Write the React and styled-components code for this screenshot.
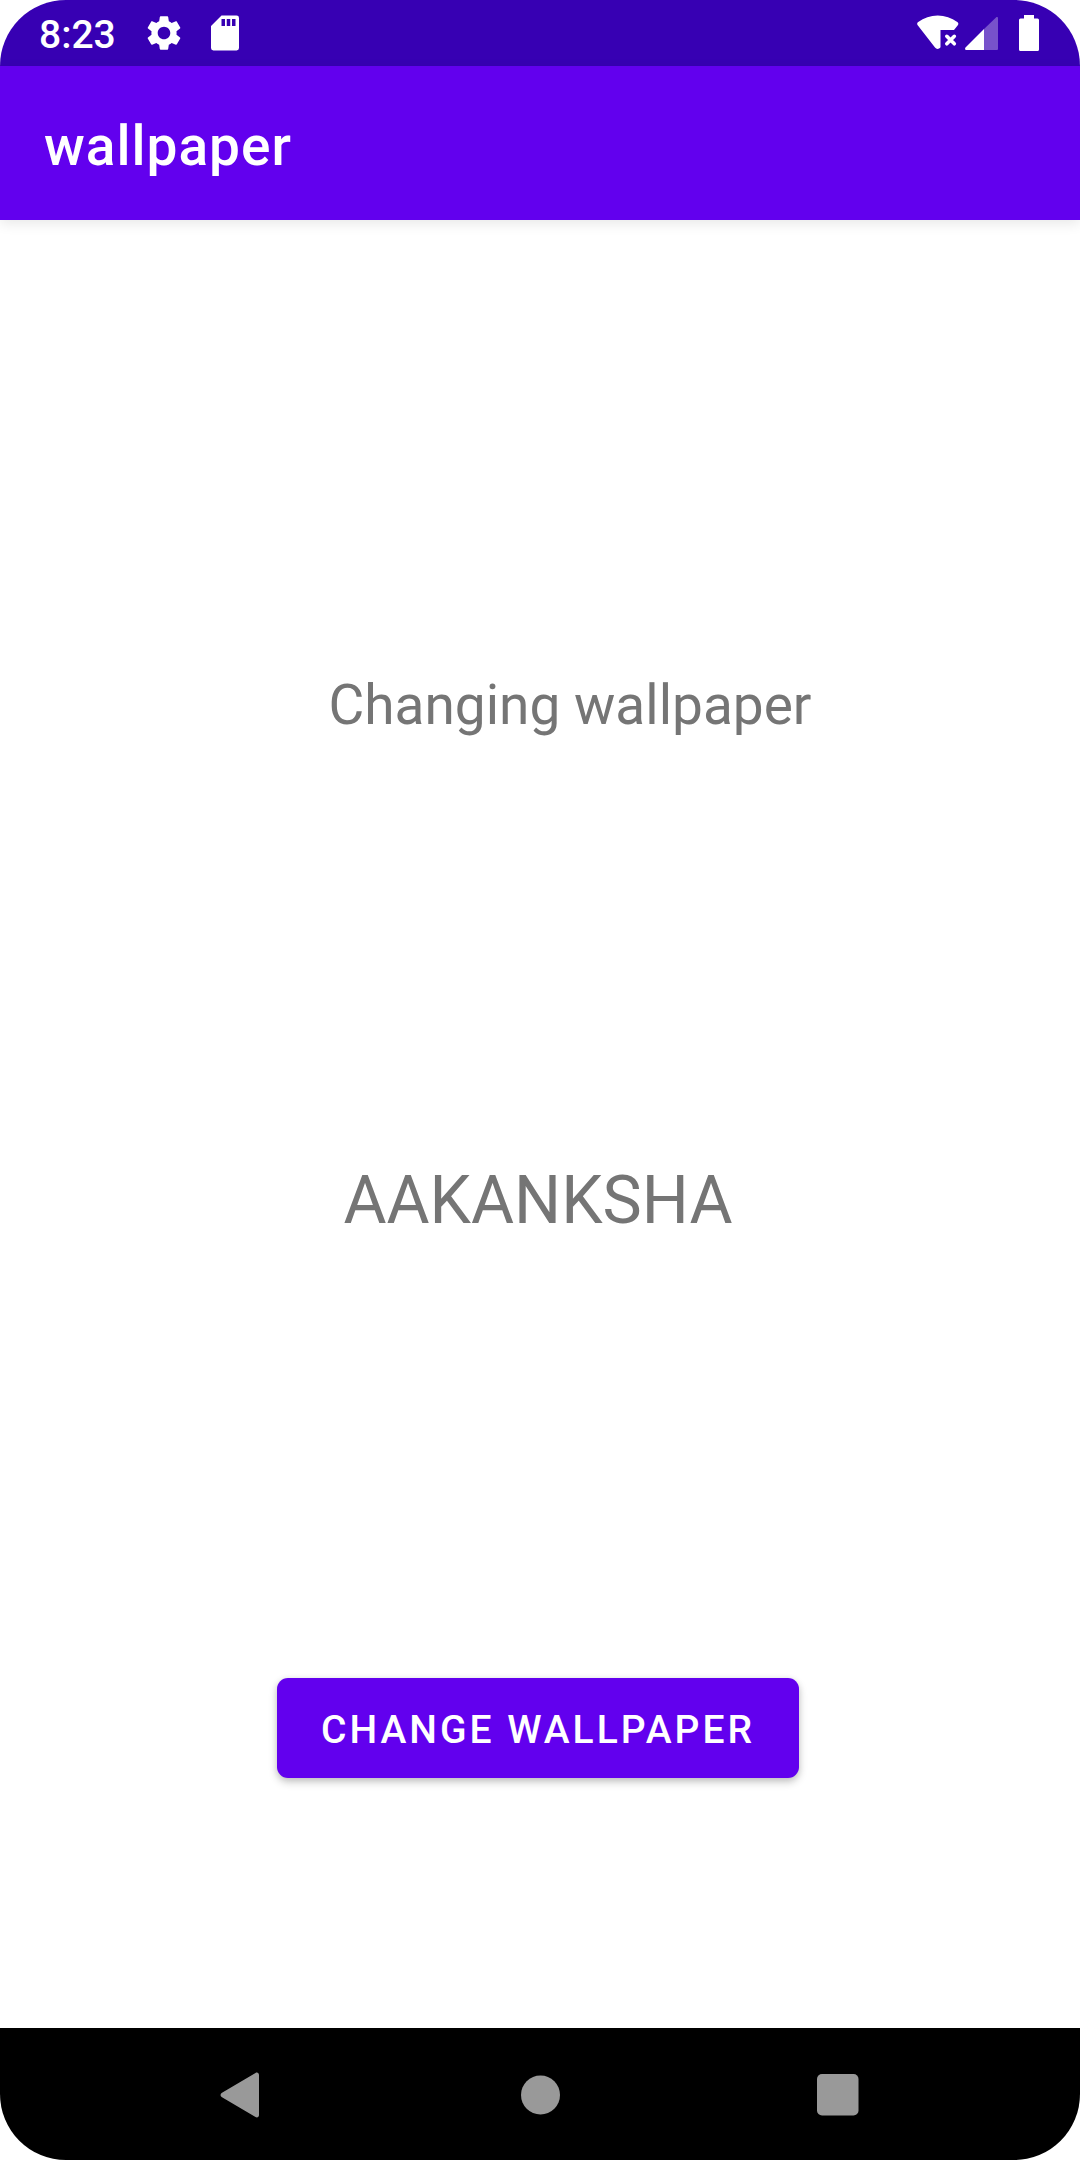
import React from "react";
import styled, { createGlobalStyle } from "styled-components";

const GlobalStyle = createGlobalStyle`
  *, *::before, *::after { box-sizing: border-box; }
  body { margin: 0; background: #ffffff; }
`;

const Screen = styled.div`
  display: flex;
  flex-direction: column;
  min-height: 100vh;
  overflow: hidden;
  border-radius: 66px;
  background: #ffffff;
  font-family: Roboto, "Noto Sans", sans-serif;
`;

const StatusBar = styled.div`
  display: flex;
  align-items: center;
  justify-content: space-between;
  height: 66px;
  padding: 0 41px 0 39px;
  background: #3700b3;
  color: #ffffff;
`;

const StatusGroup = styled.div`
  display: flex;
  align-items: center;
  gap: ${(p) => p.$gap}px;
`;

const Clock = styled.time`
  margin-right: 8px;
  padding-top: 4px;
  font-size: 39px;
  font-weight: 500;
  line-height: 46px;
`;

const Icon = styled.svg`
  display: block;
  flex: none;
  width: ${(p) => p.$w}px;
  height: ${(p) => p.$h}px;
  fill: currentColor;
`;

const AppBar = styled.header`
  display: flex;
  align-items: center;
  height: 154px;
  padding: 6px 44px 0;
  background: #6200ee;
  box-shadow: 0 4px 12px rgba(0, 0, 0, 0.09);
`;

const Title = styled.h1`
  margin: 0;
  color: #ffffff;
  font-size: 55px;
  font-weight: 500;
  line-height: 64px;
  letter-spacing: 1px;
`;

const Content = styled.main`
  display: grid;
  flex: 1;
  grid-template-rows: 453fr auto 425fr auto 439fr auto 250fr;
  justify-items: center;
  padding-right: 4px;
`;

const Label = styled.p`
  grid-row: ${(p) => p.$row};
  margin: 0;
  padding-left: ${(p) => p.$inset || 0}px;
  color: #757575;
  font-size: ${(p) => p.$size}px;
  line-height: ${(p) => p.$line}px;
`;

const PrimaryButton = styled.button`
  grid-row: 6;
  height: 100px;
  padding: 4px 44px 0;
  border: 0;
  border-radius: 11px;
  background: #6200ee;
  box-shadow: 0 4px 8px rgba(0, 0, 0, 0.22), 0 1px 6px rgba(0, 0, 0, 0.08);
  color: #ffffff;
  font-family: inherit;
  font-size: 39px;
  font-weight: 500;
  line-height: 46px;
  letter-spacing: 3px;
  text-transform: uppercase;
  cursor: pointer;
`;

const NavBar = styled.nav`
  display: grid;
  grid-template-columns: repeat(3, 1fr);
  height: 132px;
  padding: 2px 93px 0;
  background: #000000;
`;

const NavButton = styled.button`
  display: flex;
  align-items: center;
  justify-content: center;
  padding: 0;
  border: 0;
  background: transparent;
  color: #999999;
  cursor: pointer;
`;

export default function App() {
  return (
    <Screen>
      <GlobalStyle />
      <StatusBar>
        <StatusGroup $gap={19}>
          <Clock>8:23</Clock>
          <Icon $w={42} $h={42} viewBox="0 0 24 24" aria-hidden="true">
            <path d="M19.14 12.94c.04-.3.06-.61.06-.94 0-.32-.02-.64-.07-.94l2.03-1.58c.18-.14.23-.41.12-.61l-1.92-3.32c-.12-.22-.37-.29-.59-.22l-2.39.96c-.5-.38-1.03-.7-1.62-.94l-.36-2.54c-.04-.24-.24-.41-.48-.41h-3.84c-.24 0-.43.17-.47.41l-.36 2.54c-.59.24-1.13.57-1.62.94l-2.39-.96c-.22-.08-.47 0-.59.22L2.74 8.87c-.12.21-.08.47.12.61l2.03 1.58c-.05.3-.09.63-.09.94s.02.64.07.94l-2.03 1.58c-.18.14-.23.41-.12.61l1.92 3.32c.12.22.37.29.59.22l2.39-.96c.5.38 1.03.7 1.62.94l.36 2.54c.05.24.24.41.48.41h3.84c.24 0 .44-.17.47-.41l.36-2.54c.59-.24 1.13-.56 1.62-.94l2.39.96c.22.08.47 0 .59-.22l1.92-3.32c.12-.22.07-.47-.12-.61l-2.01-1.58zM12 15.6c-1.98 0-3.6-1.62-3.6-3.6s1.62-3.6 3.6-3.6 3.6 1.62 3.6 3.6-1.62 3.6-3.6 3.6z" />
          </Icon>
          <Icon $w={42} $h={42} viewBox="0 0 24 24" aria-hidden="true">
            <path d="M18.6 2H10L4 8v12.600a1.400 1.400 0 0 0 1.400 1.400h13.200a1.400 1.400 0 0 0 1.400-1.400V3.400A1.400 1.400 0 0 0 18.600 2zM12 8h-2V4h2v4zm3 0h-2V4h2v4zm3 0h-2V4h2v4z" />
          </Icon>
        </StatusGroup>
        <StatusGroup $gap={6}>
          <Icon $w={42} $h={36} viewBox="0 0 42 36" aria-hidden="true">
            <path d="M.7 10.300C-.2 9.100 0 7.900 1.200 7 7 2.700 13.500.500 20.700.500S34.500 2.700 40.300 7c1.200.900 1.400 2.100.5 3.300L37 15H23.500v17.300c-1.700 2.200-4 2.200-5.500.300z" />
            <path
              d="M29.800 21.300l7.500 7.500M37.300 21.300l-7.500 7.500"
              stroke="currentColor"
              strokeWidth="3.600"
              strokeLinecap="round"
            />
          </Icon>
          <Icon $w={34} $h={36} viewBox="0 0 34 36" aria-hidden="true">
            <path d="M19 14L.5 32.500C-.3 33.500.1 35 1.500 35H19z" />
            <path d="M19 14L31 2.400C32 1.500 33 2 33 3.200V34a1 1 0 0 1-1 1H19z" opacity="0.32" />
          </Icon>
          <Icon $w={34} $h={36} viewBox="0 0 34 36" aria-hidden="true">
            <path d="M19 0h10v3.500h3.500A1.500 1.500 0 0 1 34 5v29.500a1.500 1.500 0 0 1-1.500 1.500h-17a1.500 1.500 0 0 1-1.500-1.500V5a1.500 1.500 0 0 1 1.500-1.500H19z" />
          </Icon>
        </StatusGroup>
      </StatusBar>
      <AppBar>
        <Title>wallpaper</Title>
      </AppBar>
      <Content>
        <Label $row={2} $size={55} $line={64} $inset={64}>
          Changing wallpaper
        </Label>
        <Label $row={4} $size={66} $line={77}>
          AAKANKSHA
        </Label>
        <PrimaryButton type="button">Change wallpaper</PrimaryButton>
      </Content>
      <NavBar aria-label="System navigation">
        <NavButton type="button" aria-label="Back">
          <Icon $w={44} $h={46} viewBox="0 0 44 46" aria-hidden="true">
            <path d="M2 20.700L35.500 1c1.700-1 3.500 0 3.500 2v40c0 2-1.800 3-3.500 2L2 25.300C.1 24.200.1 21.800 2 20.700z" />
          </Icon>
        </NavButton>
        <NavButton type="button" aria-label="Home">
          <Icon $w={40} $h={40} viewBox="0 0 40 40" aria-hidden="true">
            <circle cx="20.500" cy="20" r="19.500" />
          </Icon>
        </NavButton>
        <NavButton type="button" aria-label="Overview">
          <Icon $w={42} $h={42} viewBox="0 0 42 42" aria-hidden="true">
            <rect width="41.500" height="41.500" rx="5" />
          </Icon>
        </NavButton>
      </NavBar>
    </Screen>
  );
}
